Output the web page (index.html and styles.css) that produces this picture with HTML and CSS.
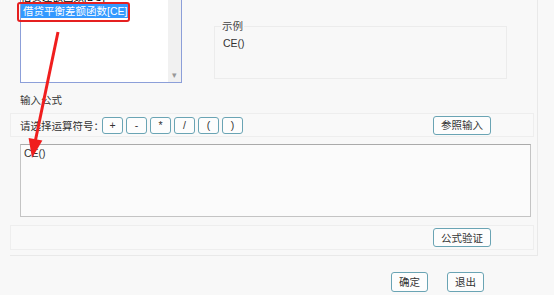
FILE: index.html
```html
<!DOCTYPE html>
<html lang="zh-CN">
<head>
    <meta charset="UTF-8">
    <title>公式编辑</title>
    <link rel="stylesheet" href="styles.css">
</head>
<body>
    <div class="panel">
        <div class="top">
            <div class="listbox">
                <div class="items">
                    <div class="item">借贷差额函数[DC]</div>
                    <div class="item"><span class="selected">借贷平衡差额函数[CE]</span></div>
                </div>
                <div class="scroll"><span class="arrow-down">▾</span></div>
            </div>
            <fieldset class="sample">
                <legend>示例</legend>
                <div class="sample-text">CE()</div>
            </fieldset>
        </div>

        <div class="label">输入公式</div>

        <div class="row">
            <span class="row-title">请选择运算符号：</span>
            <button class="op">+</button>
            <button class="op">-</button>
            <button class="op">*</button>
            <button class="op">/</button>
            <button class="op">(</button>
            <button class="op">)</button>
            <button class="btn push-right">参照输入</button>
        </div>

        <div class="formula">CE()</div>

        <div class="row row-check">
            <button class="btn push-right">公式验证</button>
        </div>
    </div>

    <div class="footer">
        <button class="btn small">确定</button>
        <button class="btn small">退出</button>
    </div>

    <!-- 标注 -->
    <div class="mark-box"></div>
    <svg class="mark-arrow" width="554" height="295" viewBox="0 0 554 295">
        <line x1="58" y1="32" x2="35.5" y2="140" stroke="#f01e1e" stroke-width="3" />
        <polygon points="32,158 28.6,138 42.4,140.6" fill="#f01e1e" />
    </svg>
</body>
</html>
```

FILE: styles.css
```css
* {
    margin: 0;
    padding: 0;
    box-sizing: border-box;
}

body {
    width: 554px;
    height: 295px;
    overflow: hidden;
    background: #f8f8f8;
    font-family: "Liberation Sans", "Noto Sans CJK SC", sans-serif;
    font-size: 10.5px;
    color: #333;
    position: relative;
}

.panel {
    margin-left: 10px;
    width: 528px;
    padding-bottom: 5px;
    border-right: 1px solid #e9e9e9;
    border-bottom: 1px solid #e9e9e9;
}

.top {
    display: flex;
    align-items: flex-start;
    padding-left: 10px;
    height: 83px;
}

.listbox {
    display: flex;
    width: 162px;
    height: 83px;
    background: #fff;
    border: 1px solid #8c9fd9;
    border-top: none;
    overflow: hidden;
}

.items {
    flex: 1;
    margin-top: -10px;
}

.item {
    height: 14px;
    line-height: 14px;
    white-space: nowrap;
    color: #000;
}

.selected {
    display: inline-block;
    background: #3399ff;
    color: #fff;
    padding: 0 2px;
    width: 107px;
}

.scroll {
    width: 13px;
    background: #f1f1f1;
    display: flex;
    align-items: flex-end;
    justify-content: center;
    padding-bottom: 2px;
}

.arrow-down {
    font-size: 9px;
    color: #999;
    line-height: 10px;
}

.sample {
    margin-left: 32px;
    margin-top: 20px;
    width: 293px;
    height: 59px;
    border: 1px solid #ececec;
    padding: 0 8px;
}

.sample legend {
    margin-left: -2px;
    padding: 0 1px;
    line-height: 12px;
    color: #444;
}

.sample-text {
    margin-top: 5px;
    line-height: 12px;
}

.label {
    margin-top: 10px;
    padding-left: 10px;
    line-height: 14px;
}

.row {
    display: flex;
    align-items: center;
    margin-top: 6px;
    margin-right: 3px;
    height: 24px;
    padding-left: 9px;
    padding-right: 42px;
    border: 1px solid #eeeeee;
    background: #f9f9f9;
}

.row-title {
    width: 82px;
    white-space: nowrap;
}

button {
    font-family: "Liberation Sans", "Noto Sans CJK SC", sans-serif;
    font-size: 10.5px;
    color: #333;
    background: #fdfdfd;
    border: 1px solid #6aa4b4;
    border-radius: 3px;
    cursor: pointer;
}

.op {
    width: 21px;
    height: 17px;
    margin-right: 3px;
    line-height: 14px;
}

.btn {
    width: 58px;
    height: 19px;
    line-height: 16px;
}

.push-right {
    margin-left: auto;
}

.formula {
    margin: 7px 6px 0 10px;
    height: 73px;
    background: #fbfbfb;
    border: 1px solid #c4c4c4;
    border-top-color: #aaa;
    padding: 1px 3px;
    line-height: 14px;
}

.row-check {
    margin-top: 8px;
    height: 25px;
}

.footer {
    display: flex;
    justify-content: flex-end;
    gap: 19px;
    margin-top: 16px;
    padding-right: 70px;
}

.small {
    width: 37px;
    height: 20px;
}

.mark-box {
    position: absolute;
    left: 17px;
    top: 2px;
    width: 113px;
    height: 20px;
    border: 2px solid #e52020;
    border-radius: 3px;
}

.mark-arrow {
    position: absolute;
    left: 0;
    top: 0;
    pointer-events: none;
}
```
